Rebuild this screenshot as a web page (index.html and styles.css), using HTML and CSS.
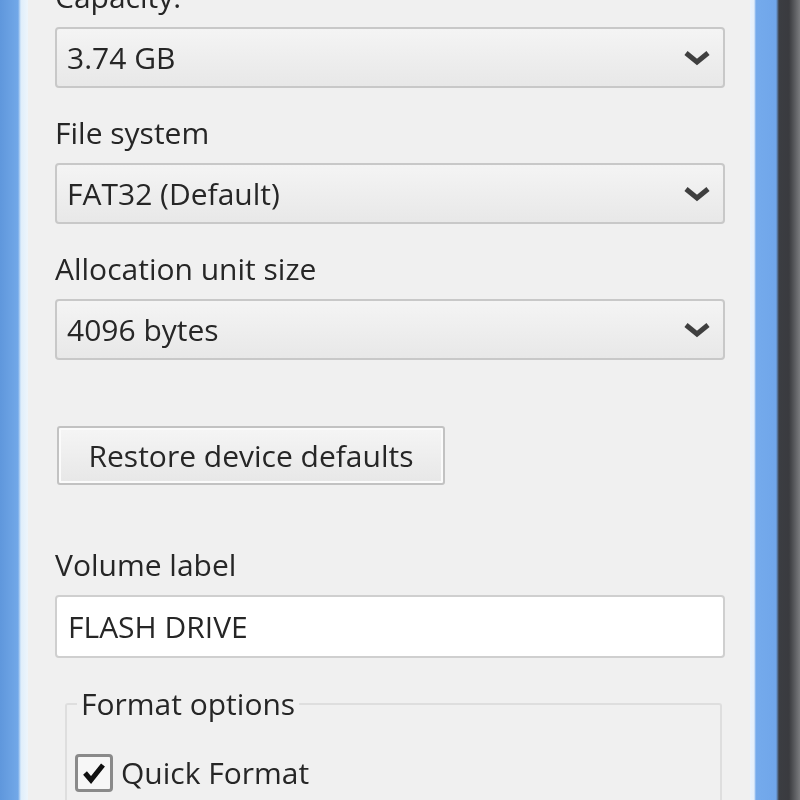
FILE: index.html
```html
<!DOCTYPE html>
<html lang="en">
<head>
    <meta charset="UTF-8" />
    <title>Format FLASH DRIVE</title>
    <link rel="stylesheet" href="styles.css">
</head>
<body>
<div class="frame-left"></div>

<main class="dialog">
    <div class="field first">
        <label for="capacity">Capacity:</label>
        <div class="combo" id="capacity">
            <span>3.74 GB</span>
            <svg class="chevron" width="28" height="16" viewBox="0 0 28 16"><polyline points="3,3 14,12 25,3" /></svg>
        </div>
    </div>

    <div class="field">
        <label for="fileSystem">File system</label>
        <div class="combo" id="fileSystem">
            <span>FAT32 (Default)</span>
            <svg class="chevron" width="28" height="16" viewBox="0 0 28 16"><polyline points="3,3 14,12 25,3" /></svg>
        </div>
    </div>

    <div class="field">
        <label for="unitSize">Allocation unit size</label>
        <div class="combo" id="unitSize">
            <span>4096 bytes</span>
            <svg class="chevron" width="28" height="16" viewBox="0 0 28 16"><polyline points="3,3 14,12 25,3" /></svg>
        </div>
    </div>

    <button type="button" class="restore">Restore device defaults</button>

    <div class="field">
        <label for="volumeLabel">Volume label</label>
        <input type="text" id="volumeLabel" value="FLASH DRIVE">
    </div>

    <fieldset class="options">
        <legend>Format options</legend>
        <label class="check">
            <span class="box">
                <svg width="30" height="30" viewBox="0 0 30 30"><polyline points="6,15 12,22 24,7" /></svg>
            </span>
            Quick Format
        </label>
    </fieldset>
</main>

<div class="frame-right"></div>
</body>
</html>
```

FILE: styles.css
```css
body {
    margin: 0;
    height: 800px;
    overflow: hidden;
    display: flex;
    background-color: #f0f0f0;
    font-family: 'Open Sans', 'Liberation Sans', sans-serif;
    font-size: 30px;
    color: #262626;
    filter: blur(0.6px);
}

.frame-left {
    width: 28px;
    flex-shrink: 0;
    background: linear-gradient(to right, #5f97dc, #72a8e8 18px, #dfeefb 21px, #eef5fb);
}

.frame-right {
    width: 50px;
    flex-shrink: 0;
    background: linear-gradient(to right, #eaf2fb, #e4effb 4px, #74aaec 6px, #70a6ea 26px, #3b3d42 29px, #3a3b3f 39px, #7a7b7e 50px);
}

.dialog {
    flex-grow: 1;
    padding: 0 25px 0 27px;
    display: flex;
    flex-direction: column;
}

.dialog > * {
    flex-shrink: 0;
}

.field {
    display: flex;
    flex-direction: column;
    margin-top: 27px;
}

.field.first {
    margin-top: -21px;
}

.field label {
    height: 36px;
    line-height: 36px;
    margin-bottom: 12px;
}

.combo {
    height: 61px;
    box-sizing: border-box;
    border: 2px solid #c8c8c8;
    border-radius: 4px;
    background: linear-gradient(#f4f4f4, #e8e8e8);
    display: flex;
    align-items: center;
    justify-content: space-between;
    padding: 0 12px 0 10px;
}

.chevron polyline {
    fill: none;
    stroke: #3f3f3f;
    stroke-width: 5;
}

.restore {
    align-self: flex-start;
    margin: 66px 0 0 2px;
    width: 388px;
    height: 59px;
    border: 2px solid #c2c2c2;
    border-radius: 3px;
    background: linear-gradient(#f5f5f5, #e7e7e7);
    box-shadow: inset 0 0 0 2px #fbfbfb;
    font-family: inherit;
    font-size: 30px;
    color: #262626;
}

.restore + .field {
    margin-top: 62px;
}

.field input {
    height: 63px;
    box-sizing: border-box;
    border: 2px solid #cfcfcf;
    border-radius: 4px;
    background: #fff;
    padding: 0 11px;
    font-family: inherit;
    font-size: 30px;
    color: #262626;
}

.options {
    flex: 1 1 0;
    min-height: 0;
    overflow: hidden;
    margin: 25px 3px 0 10px;
    padding: 10px 0 0 8px;
    border: 2px solid #dedede;
    border-bottom: none;
    border-radius: 3px 3px 0 0;
}

.options legend {
    padding: 0 4px;
    margin-left: 2px;
}

.check {
    display: flex;
    align-items: center;
    gap: 8px;
    margin-top: 18px;
}

.box {
    width: 38px;
    height: 38px;
    box-sizing: border-box;
    border: 3px solid #8a8a8a;
    border-radius: 4px;
    background: #f7f7f7;
    display: flex;
    align-items: center;
    justify-content: center;
}

.box polyline {
    fill: none;
    stroke: #111;
    stroke-width: 5;
}
```
